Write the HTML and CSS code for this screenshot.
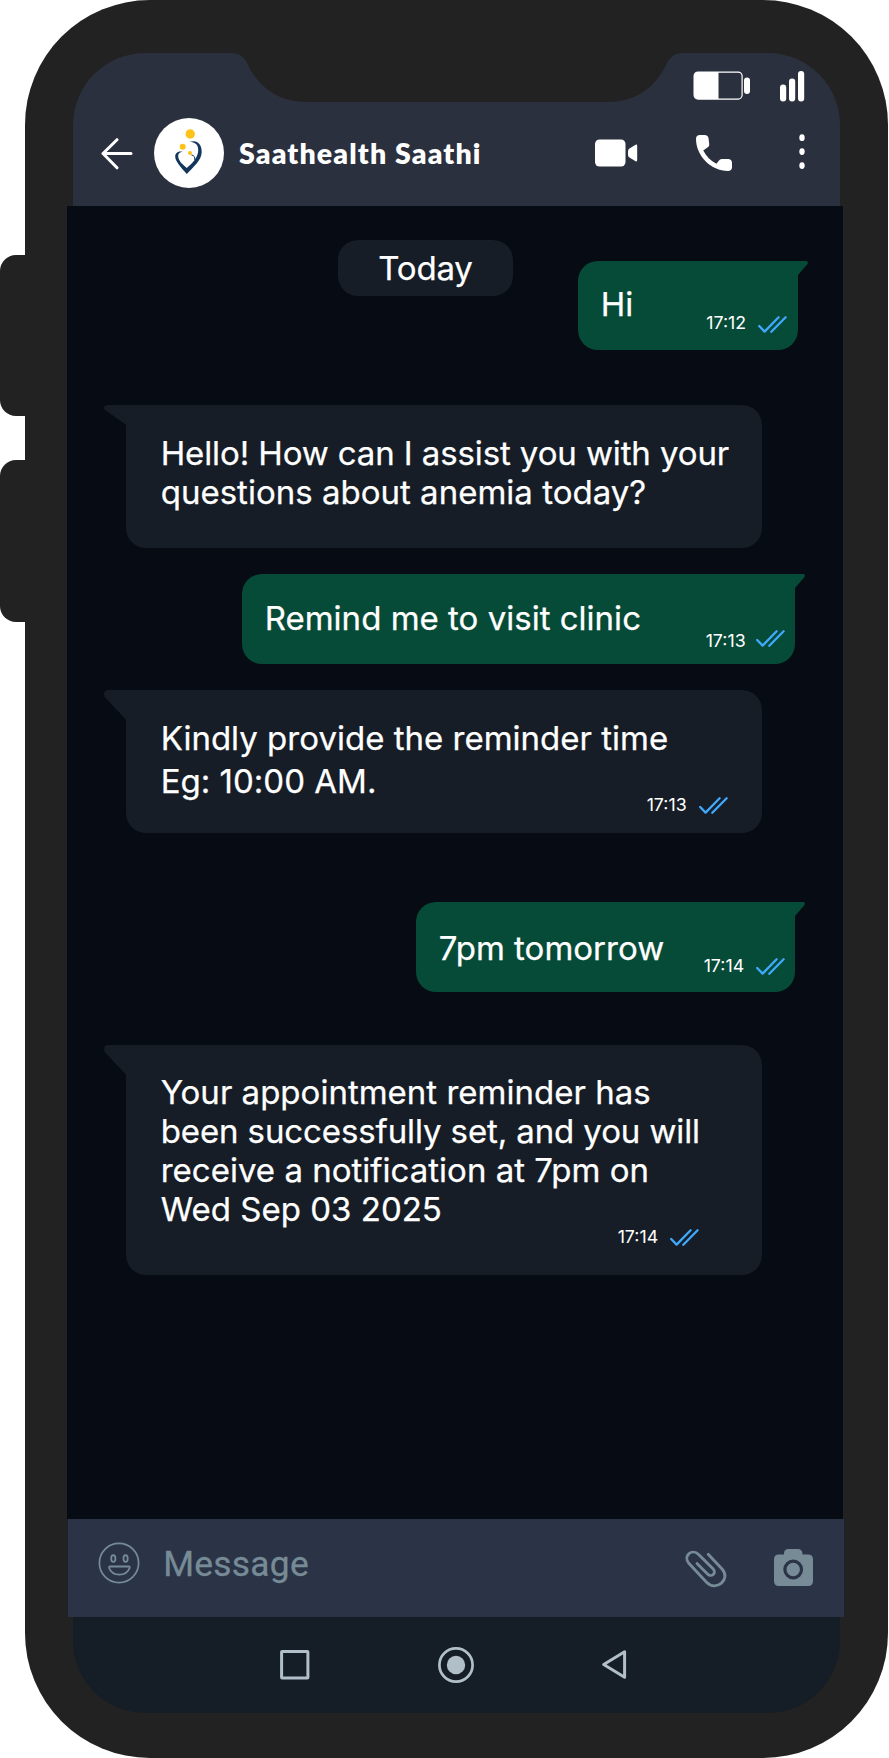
FILE: index.html
```html
<!DOCTYPE html>
<html lang="en">
<head>
    <meta charset="UTF-8">
    <meta name="viewport" content="width=device-width, initial-scale=1.0">
    <title>Saathealth Saathi</title>
    <link rel="stylesheet" href="styles.css">
</head>
<body>
    <!-- shared icons -->
    <svg class="icon-defs" width="0" height="0">
        <symbol id="ticks" viewBox="0 0 29 17">
            <path d="M1.2 10L6.6 15.6L20.6 1.3M13.3 15.8L27.6 1.3" fill="none" stroke="#3fa9fb" stroke-width="2.3" stroke-linecap="round" stroke-linejoin="round"/>
        </symbol>
        <symbol id="tail-left" viewBox="0 0 24 30" preserveAspectRatio="none">
            <path d="M24 0H4Q0 0 0 4.5Q0 6.5 2 8.5L22.3 30H24Z" fill="#161d26"/>
        </symbol>
        <symbol id="tail-right" viewBox="0 0 12 14" preserveAspectRatio="none">
            <path d="M0 0H10.5Q12.5 .6 11.5 3L2 14H0Z" fill="#064b37"/>
        </symbol>
    </svg>

    <div class="phone">
        <span class="side-button volume-up"></span>
        <span class="side-button volume-down"></span>
        <svg class="notch" width="450" height="50" viewBox="0 0 450 50">
            <path d="M0 0C7 0 12 4 15 10C26 34 46 49 74 49H376C404 49 424 34 435 10C438 4 443 0 450 0Z" fill="#222"/>
        </svg>

        <!-- START HEADER -->
        <header class="header">
            <div class="status-bar">
                <svg width="58" height="30" viewBox="0 0 58 30">
                    <rect x="1.1" y="1.1" width="48" height="27" rx="4" fill="none" stroke="#fff" stroke-width="1.2"/>
                    <path d="M5 1H25.5V28H5Q1 28 1 24V5Q1 1 5 1Z" fill="#fff"/>
                    <rect x="51" y="6.5" width="6" height="16.5" rx="3" fill="#fff"/>
                </svg>
                <svg class="signal" width="25" height="31" viewBox="0 0 25 31">
                    <rect x="0" y="13.5" width="6.2" height="17" rx="3" fill="#fff"/>
                    <rect x="9" y="7.5" width="6.2" height="23" rx="3" fill="#fff"/>
                    <rect x="18" y="0" width="6.2" height="30.5" rx="3" fill="#fff"/>
                </svg>
            </div>
            <div class="contact-bar">
                <svg class="back" width="32" height="32" viewBox="0 0 32 32">
                    <path d="M16 1.7L2 15.5L16 29.8M2 15.5H30" fill="none" stroke="#fff" stroke-width="3" stroke-linecap="round" stroke-linejoin="round"/>
                </svg>
                <div class="avatar">
                    <svg width="70" height="70" viewBox="0 0 70 70">
                        <circle cx="36.2" cy="16" r="4.7" fill="#fcc419"/>
                        <circle cx="28.7" cy="28.7" r="3" fill="#fcc419"/>
                        <circle cx="36" cy="35" r="2" fill="#fcc419"/>
                        <path d="M35.5 24C43 21.5 47.8 26 47.7 34C47.5 43 39 49 32.8 56C27 49.5 21 43 21.2 38.5C21.3 34.5 25 32.8 28.5 33.8C24.8 34.2 23.7 36.5 24.5 40C25.5 44 29.5 47 32.7 50C38 45.5 43.7 40 44.2 33C44.6 26.5 41 24 35.5 24Z" fill="#12365c"/>
                        <path d="M37.5 37Q41.3 37.5 40.8 42" fill="none" stroke="#12365c" stroke-width="1"/>
                    </svg>
                </div>
                <h1>Saathealth Saathi</h1>
                <svg class="video" width="43" height="28" viewBox="0 0 43 28">
                    <rect x="0" y="0.5" width="30.5" height="27" rx="4.5" fill="#fff"/>
                    <path d="M40.5 5.8Q42.2 5 42.2 7V21Q42.2 23 40.5 22.2L34.5 18.5Q33 17.5 33 16V12Q33 10.5 34.5 9.5Z" fill="#fff"/>
                </svg>
                <svg class="call" width="36" height="36" viewBox="3 3 18 18">
                    <path d="M6.62 10.79c1.44 2.83 3.76 5.14 6.59 6.59l1.3-1.6c.5-.6 1.1-.8 1.9-.8h2.6c1.3 0 2 .7 2 2V19c0 1.3-.7 2-2 2C10.5 21 3 13.39 3 5c0-1.3.7-2 2-2h2.2c1.3 0 2 .6 2.1 1.9l.3 2.5c.1.9-.2 1.5-.9 1.9z" fill="#fff"/>
                </svg>
                <svg class="more" width="6" height="36" viewBox="0 0 6 36">
                    <ellipse cx="3" cy="3.7" rx="2.7" ry="3.4" fill="#fff"/>
                    <ellipse cx="3" cy="17.6" rx="2.7" ry="3.4" fill="#fff"/>
                    <ellipse cx="3" cy="31.6" rx="2.7" ry="3.4" fill="#fff"/>
                </svg>
            </div>
        </header>
        <!-- END HEADER -->

        <!-- START CHAT -->
        <main class="chat">
            <div class="first-row">
                <div class="day">Today</div>
                <div class="bubble sent hi">
                    <svg class="tail"><use href="#tail-right"/></svg>
                    <p>Hi</p>
                    <div class="meta"><time>17:12</time><svg class="ticks"><use href="#ticks"/></svg></div>
                </div>
            </div>

            <div class="bubble received hello">
                <svg class="tail"><use href="#tail-left"/></svg>
                <p><span class="tight">Hello! How can I assist you with your</span><br>questions about anemia today?</p>
            </div>

            <div class="bubble sent remind">
                <svg class="tail"><use href="#tail-right"/></svg>
                <p>Remind me to visit clinic</p>
                <div class="meta"><time>17:13</time><svg class="ticks"><use href="#ticks"/></svg></div>
            </div>

            <div class="bubble received kindly">
                <svg class="tail"><use href="#tail-left"/></svg>
                <p>Kindly provide the reminder time<br>Eg: 10:00 AM.</p>
                <div class="meta"><time>17:13</time><svg class="ticks"><use href="#ticks"/></svg></div>
            </div>

            <div class="bubble sent tomorrow">
                <svg class="tail"><use href="#tail-right"/></svg>
                <p>7pm tomorrow</p>
                <div class="meta"><time>17:14</time><svg class="ticks"><use href="#ticks"/></svg></div>
            </div>

            <div class="bubble received appointment">
                <svg class="tail"><use href="#tail-left"/></svg>
                <p>Your appointment reminder has<br><span class="tight">been successfully set, and you will</span><br>receive a notification at 7pm on<br>Wed Sep 03 2025</p>
                <div class="meta"><time>17:14</time><svg class="ticks"><use href="#ticks"/></svg></div>
            </div>
        </main>
        <!-- END CHAT -->

        <div class="message-bar">
            <svg class="smile" width="42" height="42" viewBox="0 0 42 42" fill="none" stroke="#778b97">
                <circle cx="21" cy="21" r="19.6" stroke-width="1.7"/>
                <ellipse cx="15.3" cy="16.5" rx="2.1" ry="3.4" stroke-width="1.8"/>
                <ellipse cx="27.6" cy="16.5" rx="2.1" ry="3.4" stroke-width="1.8"/>
                <path d="M12 24.5H31Q32 24.5 31.6 26C30 30.3 26 32.6 21.4 32.6S12.7 30.3 11.1 26Q10.8 24.5 12 24.5Z" stroke-width="1.8"/>
            </svg>
            <span class="placeholder">Message</span>
            <svg class="clip" width="42" height="38" viewBox="0 0 42 38">
                <path d="M12 13.5L22.5 24C26.5 28 32 23 28 18.8L13.6 4.4C7 -1.9 -2 5.8 3.6 13L21.5 32.2C31.5 42.3 46 29 37.3 19.2L23.2 4.3" fill="none" stroke="#778b97" stroke-width="2.8" stroke-linecap="round"/>
            </svg>
            <svg class="camera" width="39" height="37" viewBox="0 0 39 37">
                <path d="M5 5.5H10V4.5Q10 0 14.5 0H24Q28 0 28.5 4.5V5.5H34Q39 5.5 39 10.5V32Q39 37 34 37H5Q0 37 0 32V10.5Q0 5.5 5 5.5Z" fill="#778b97"/>
                <circle cx="19.2" cy="20.5" r="8.3" fill="#778b97" stroke="#2a3446" stroke-width="3.2"/>
            </svg>
        </div>

        <nav class="nav-bar">
            <svg width="30" height="30" viewBox="0 0 30 30">
                <rect x="1.6" y="1.6" width="26.3" height="26.3" rx=".5" fill="none" stroke="#b1bfc9" stroke-width="3"/>
            </svg>
            <svg class="home" width="36" height="36" viewBox="0 0 36 36">
                <circle cx="18" cy="18" r="16.6" fill="none" stroke="#b1bfc9" stroke-width="2.7"/>
                <circle cx="18" cy="18" r="9.2" fill="#b1bfc9"/>
            </svg>
            <svg class="prev" width="25" height="29" viewBox="0 0 25 29">
                <path d="M1.7 14.5L22.6 1.8V27.2Z" fill="none" stroke="#b1bfc9" stroke-width="3" stroke-linejoin="round"/>
            </svg>
        </nav>
    </div>
</body>
</html>
```
FILE: styles.css
```css
* {
    box-sizing: border-box;
}

body {
    margin: 0;
    background-color: #fff;
    font-family: Inter, "Liberation Sans", sans-serif;
    color: #fff;
}

svg {
    display: block;
    flex-shrink: 0;
}

.icon-defs {
    position: absolute;
}

.phone {
    position: relative;
    width: 863.5px;
    height: 1758px;
    margin-left: 24.5px;
    padding-top: 53px;
    background-color: #222;
    border-radius: 125px;
}

.side-button {
    position: absolute;
    left: -24.5px;
    width: 26px;
    height: 161.5px;
    background-color: #222;
    border-radius: 16px 0 0 16px;
}

.volume-up {
    top: 254.5px;
}

.volume-down {
    top: 460px;
}

.notch {
    position: absolute;
    top: 53px;
    left: 207.5px;
}

/* header */
.header {
    width: 767px;
    height: 153px;
    margin-left: 48.5px;
    background-color: #2b303e;
    border-radius: 72px 72px 0 0;
}

.status-bar {
    display: flex;
    justify-content: flex-end;
    gap: 29px;
    height: 57px;
    padding: 18px 35px 0 0;
}

.contact-bar {
    display: flex;
    align-items: center;
    height: 86px;
    padding-left: 28px;
}

.back {
    margin-top: 1px;
}

.avatar {
    width: 70px;
    height: 70px;
    margin-left: 21px;
    background-color: #fff;
    border-radius: 50%;
}

.contact-bar h1 {
    width: 242px;
    margin: 0 0 0 15px;
    font-family: Lato, sans-serif;
    font-size: 28.5px;
    font-weight: 800;
    letter-spacing: 1.15px;
    line-height: 36px;
    white-space: nowrap;
}

.video {
    margin-left: 114px;
}

.call {
    margin-left: 58px;
}

.more {
    margin: 0 0 2px 66.5px;
}

/* chat */
.chat {
    display: flex;
    flex-direction: column;
    width: 776px;
    height: 1312.5px;
    margin-left: 42.7px;
    padding-top: 34px;
    background-color: #060b14;
}

.first-row {
    display: flex;
    height: 110.5px;
    padding-left: 270.5px;
}

.day {
    width: 175.5px;
    height: 55.5px;
    background-color: #161d26;
    border-radius: 20px;
    font-size: 33px;
    line-height: 56px;
    text-align: center;
    letter-spacing: -.2px;
    -webkit-text-stroke: .25px #fff;
}

.bubble {
    position: relative;
    display: flex;
    border-radius: 20px;
}

.bubble p {
    margin: 0;
    font-size: 33px;
    line-height: 39px;
    letter-spacing: .01px;
    white-space: nowrap;
    -webkit-text-stroke: .25px #fff;
}

.bubble .tight {
    letter-spacing: -.11px;
}

.sent {
    justify-content: space-between;
    align-self: flex-end;
    height: 89.5px;
    padding: 25px 9.5px 0 23px;
    background-color: #064b37;
    border-top-right-radius: 0;
}

.received {
    flex-direction: column;
    width: 636px;
    height: 143px;
    margin-left: 58.5px;
    padding: 28.5px 0 0 35px;
    background-color: #161d26;
    border-top-left-radius: 0;
}

.tail {
    position: absolute;
    top: 0;
}

.sent .tail {
    right: -10px;
    width: 12px;
    height: 14px;
}

.received .tail {
    left: -22px;
    width: 24px;
    height: 30px;
}

.meta {
    display: flex;
    align-items: center;
    align-self: flex-end;
    gap: 12px;
    height: 20px;
    margin-bottom: 15.5px;
    font-size: 17.8px;
    line-height: 20px;
}

.ticks {
    width: 29px;
    height: 17px;
}

.hi {
    align-self: flex-start;
    width: 219.5px;
    margin: 20.5px 0 0 65px;
    padding: 24px 10.5px 0 22.5px;
}

.hi .meta {
    margin-bottom: 17px;
}

.hi .ticks {
    margin-top: 2px;
}

.hello {
    margin-top: 54.5px;
}

.hello .tail {
    height: 20px;
}

.remind {
    width: 553px;
    margin: 26px 48.5px 0 0;
}

.remind .meta {
    gap: 10.5px;
    margin-bottom: 13px;
}

.remind .ticks {
    margin-bottom: 5px;
}

.kindly {
    margin-top: 26.5px;
    padding-top: 27px;
}

.kindly p {
    line-height: 43px;
}

.kindly .meta {
    margin: -8px 34px 0 0;
}

.tomorrow {
    width: 379px;
    margin: 69px 48.5px 0 0;
    padding-top: 27px;
}

.appointment {
    height: 230px;
    margin-top: 53px;
    padding-top: 28.5px;
}

.appointment .meta {
    margin: -2px 62.5px 0 0;
}

/* bottom bars */
.message-bar {
    display: flex;
    align-items: flex-start;
    width: 776px;
    height: 98.5px;
    margin-left: 43.7px;
    padding-left: 30px;
    background-color: #2a3446;
}

.smile {
    margin-top: 23px;
}

.placeholder {
    width: 145px;
    margin: 25.5px 0 0 23px;
    color: #778b97;
    font-family: Roboto, sans-serif;
    font-size: 35.3px;
    letter-spacing: .3px;
    line-height: 41px;
    -webkit-text-stroke: .3px #778b97;
}

.clip {
    margin: 31px 0 0 376.5px;
}

.camera {
    margin: 30.5px 0 0 47px;
}

.nav-bar {
    display: flex;
    align-items: center;
    width: 766.5px;
    height: 96px;
    margin-left: 48.5px;
    padding: 0 0 1px 206.5px;
    background-color: #151d26;
    border-radius: 0 0 72px 72px;
}

.home {
    margin-left: 128px;
}

.prev {
    margin-left: 128.5px;
}
```
